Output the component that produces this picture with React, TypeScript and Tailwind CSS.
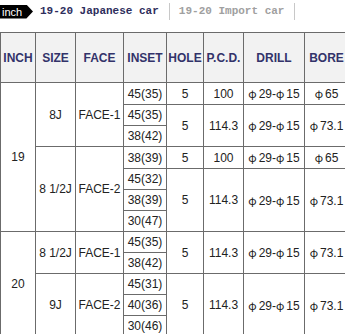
import React from "react";

type Cell = { text: string; rows?: number; cls?: string };

const rows: Cell[][] = [
  [
    { text: "19", rows: 7 },
    { text: "8J", rows: 3 },
    { text: "FACE-1", rows: 3 },
    { text: "45(35)" },
    { text: "5" },
    { text: "100" },
    { text: "φ29-φ15" },
    { text: "φ65" },
  ],
  [
    { text: "45(35)" },
    { text: "5", rows: 2 },
    { text: "114.3", rows: 2 },
    { text: "φ29-φ15", rows: 2 },
    { text: "φ73.1", rows: 2 },
  ],
  [{ text: "38(42)" }],
  [
    { text: "8 1/2J", rows: 4 },
    { text: "FACE-2", rows: 4 },
    { text: "38(39)" },
    { text: "5" },
    { text: "100" },
    { text: "φ29-φ15" },
    { text: "φ65" },
  ],
  [
    { text: "45(32)" },
    { text: "5", rows: 3 },
    { text: "114.3", rows: 3 },
    { text: "φ29-φ15", rows: 3 },
    { text: "φ73.1", rows: 3 },
  ],
  [{ text: "38(39)" }],
  [{ text: "30(47)" }],
  [
    { text: "20", rows: 5 },
    { text: "8 1/2J", rows: 2 },
    { text: "FACE-1", rows: 2 },
    { text: "45(35)" },
    { text: "5", rows: 2 },
    { text: "114.3", rows: 2 },
    { text: "φ29-φ15", rows: 2 },
    { text: "φ73.1", rows: 2 },
  ],
  [{ text: "38(42)" }],
  [
    { text: "9J", rows: 3 },
    { text: "FACE-2", rows: 3 },
    { text: "45(31)" },
    { text: "5", rows: 3 },
    { text: "114.3", rows: 3 },
    { text: "φ29-φ15", rows: 3 },
    { text: "φ73.1", rows: 3 },
  ],
  [{ text: "40(36)" }],
  [{ text: "30(46)" }],
];

const heads = ["INCH", "SIZE", "FACE", "INSET", "HOLE", "P.C.D.", "DRILL", "BORE"];
const widths = ["w-[35px]", "w-[40px]", "w-[48px]", "w-[43px]", "w-[37px]", "w-[40px]", "w-[61px]", "w-[44px]"];

const Phi = ({ text }: { text: string }) => {
  // split φ so it gets the wide CJK glyph like the original
  const parts = text.split("φ");
  return (
    <>
      {parts.map((p, i) => (
        <React.Fragment key={i}>
          {i > 0 && <span className="font-['Noto_Sans_CJK_JP',sans-serif] text-[11px] mr-[2px]">φ</span>}
          {p}
        </React.Fragment>
      ))}
    </>
  );
};

export default function App() {
  return (
    <div className="w-[345px] h-[334px] overflow-hidden bg-white font-['Liberation_Sans',Arial,sans-serif]">
      <div className="flex items-center h-[22px] pt-[1px]">
        <div className="h-[14px] w-[33px] bg-black text-white text-[11px] leading-[14px] pl-[2px] [clip-path:polygon(0_0,80%_0,100%_50%,80%_100%,0_100%)]">
          inch
        </div>
        <div className="ml-[7px] pr-[10px] font-['Liberation_Mono',monospace] font-bold text-[11px] text-[#2e2e5c]">
          19-20 Japanese car
        </div>
        <div className="h-[17px] w-px bg-[#c8c8c8]" />
        <div className="pl-[9px] pr-[10px] font-['Liberation_Mono',monospace] font-bold text-[11px] text-[#a0a0a0]">
          19-20 Import car
        </div>
        <div className="h-[17px] w-px bg-[#c8c8c8]" />
      </div>
      <table className="mt-[10px] border-collapse table-fixed w-[348px] text-[12px] text-[#222]">
        <colgroup>
          {widths.map((w, i) => (
            <col key={i} className={w} />
          ))}
        </colgroup>
        <thead>
          <tr className="h-[50px] bg-[#f2f2f2]">
            {heads.map((h) => (
              <th key={h} className="border border-[#6b6b6b] p-0 font-bold text-[12px] text-[#33336a] text-center">
                {h}
              </th>
            ))}
          </tr>
        </thead>
        <tbody>
          {rows.map((r, i) => (
            <tr key={i} className="h-[21px]">
              {r.map((c, j) => (
                <td
                  key={j}
                  rowSpan={c.rows}
                  className="border border-[#6b6b6b] p-0 text-center leading-[20px] whitespace-nowrap"
                >
                  {c.text.includes("φ") ? <Phi text={c.text} /> : c.text}
                </td>
              ))}
            </tr>
          ))}
        </tbody>
      </table>
    </div>
  );
}
